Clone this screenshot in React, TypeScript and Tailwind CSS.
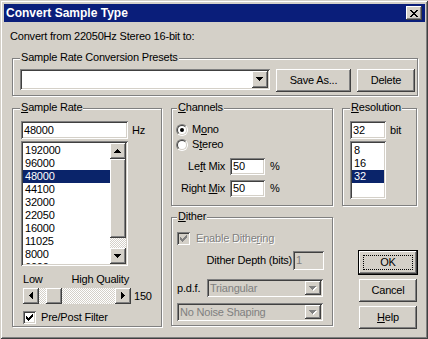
import React from "react";

const raised =
  "bg-[#d4d0c8] shadow-[inset_-1px_-1px_0_#404040,inset_1px_1px_0_#fff,inset_-2px_-2px_0_#808080,inset_2px_2px_0_#d4d0c8]";
const sunken =
  "shadow-[inset_1px_1px_0_#808080,inset_-1px_-1px_0_#fff,inset_2px_2px_0_#404040,inset_-2px_-2px_0_#d4d0c8]";
const dither = "bg-[image:repeating-conic-gradient(#d4d0c8_0_25%,#fff_0_50%)] bg-[length:2px_2px]";
const grayed = "text-[#808080] [text-shadow:1px_1px_0_#fff]";

const arrows: Record<string, { w: number; h: number; d: string }> = {
  down: { w: 7, h: 4, d: "M0 0h7v1H0z M1 1h5v1H1z M2 2h3v1H2z M3 3h1v1H3z" },
  up: { w: 7, h: 4, d: "M3 0h1v1H3z M2 1h3v1H2z M1 2h5v1H1z M0 3h7v1H0z" },
  left: { w: 4, h: 7, d: "M3 0h1v7H3z M2 1h1v5H2z M1 2h1v3H1z M0 3h1v1H0z" },
  right: { w: 4, h: 7, d: "M0 0h1v7H0z M1 1h1v5H1z M2 2h1v3H2z M3 3h1v1H3z" },
};

function Arrow({ dir, disabled }: { dir: string; disabled?: boolean }) {
  const a = arrows[dir];
  return (
    <svg width={a.w + 1} height={a.h + 1} shapeRendering="crispEdges">
      {disabled && <path d={a.d} fill="#fff" transform="translate(1 1)" />}
      <path d={a.d} fill={disabled ? "#808080" : "#000"} />
    </svg>
  );
}

function Check({ color = "#000" }: { color?: string }) {
  return (
    <svg width="7" height="7" shapeRendering="crispEdges">
      <path
        d="M6 0h1v1H6z M5 1h2v1H5z M0 2h1v1H0z M4 2h3v1H4z M0 3h2v1H0z M3 3h3v1H3z M0 4h5v1H0z M1 5h3v1H1z M2 6h1v1H2z"
        fill={color}
      />
    </svg>
  );
}

function Group({ label, className, left = "left-[7px]", children }: any) {
  return (
    <div className={`relative border border-[#808080] shadow-[inset_1px_1px_0_#fff,1px_1px_0_#fff] ${className}`}>
      <span className={`absolute -top-[8px] ${left} px-[1px] bg-[#d4d0c8] leading-[13px]`}>{label}</span>
      {children}
    </div>
  );
}

function Button({ children, className = "" }: any) {
  return <div className={`${raised} h-[23px] w-[58px] flex items-center justify-center ${className}`}>{children}</div>;
}

function CheckBox({ disabled }: { disabled?: boolean }) {
  return (
    <div className={`${sunken} ${disabled ? "bg-[#d4d0c8]" : "bg-white"} w-[13px] h-[13px] flex items-center justify-center shrink-0`}>
      <Check color={disabled ? "#808080" : "#000"} />
    </div>
  );
}

function Radio({ checked }: { checked?: boolean }) {
  return (
    <div className="w-[12px] h-[12px] rounded-full border border-t-[#808080] border-l-[#808080] border-b-white border-r-white shrink-0">
      <div className="w-full h-full rounded-full border border-t-[#404040] border-l-[#404040] border-b-[#d4d0c8] border-r-[#d4d0c8] bg-white flex items-center justify-center">
        {checked && <div className="w-[4px] h-[4px] rounded-full bg-black" />}
      </div>
    </div>
  );
}

function Combo({ text, disabled, className }: any) {
  return (
    <div className={`${sunken} ${disabled ? "bg-[#d4d0c8]" : "bg-white"} p-[2px] flex ${className}`}>
      <div className={`flex-1 pl-[1px] flex items-center ${disabled ? "text-[#808080]" : ""}`}>{text}</div>
      <div className={`${raised} w-[16px] h-full flex items-center justify-center`}>
        <Arrow dir="down" disabled={disabled} />
      </div>
    </div>
  );
}

function Edit({ value, className, disabled }: any) {
  return (
    <div className={`${sunken} ${disabled ? "bg-[#d4d0c8] text-[#808080]" : "bg-white"} pl-[3px] flex items-center ${className}`}>
      {value}
    </div>
  );
}

const rates = ["192000", "96000", "48000", "44100", "32000", "22050", "16000", "11025", "8000", "6000"];

export default function App() {
  return (
    <div className="w-[428px] h-[339px] overflow-hidden bg-[#d4d0c8] pl-[4px] pr-[3px] pt-[4px] shadow-[inset_1px_1px_0_#d4d0c8,inset_-1px_-1px_0_#404040,inset_2px_2px_0_#fff,inset_-2px_-2px_0_#808080] font-['Liberation_Sans',Arial,sans-serif] text-[11px] leading-[13px] tracking-[-0.2px] text-black">
      <div className="h-[18px] bg-[#0a1e7a] flex items-center justify-between pl-[2px] pr-[3px]">
        <span className="text-white font-bold text-[12px] tracking-normal">Convert Sample Type</span>
        <div className={`${raised} w-[16px] h-[14px] flex items-center justify-center`}>
          <svg width="8" height="7" shapeRendering="crispEdges">
            <path
              d="M0 0h2v1H0z M6 0h2v1H6z M1 1h2v1H1z M5 1h2v1H5z M2 2h4v1H2z M3 3h2v1H3z M2 4h4v1H2z M1 5h2v1H1z M5 5h2v1H5z M0 6h2v1H0z M6 6h2v1H6z"
              fill="#000"
            />
          </svg>
        </div>
      </div>

      <div className="pl-[8px]">
        <div className="-ml-[2px] mt-[8px] h-[13px]">Convert from 22050Hz Stereo 16-bit to:</div>

        <Group label="Sample Rate Conversion Presets" className="mt-[15px] w-[406px] h-[38px] pl-[7px] pt-[10px] flex">
          <Combo className="w-[250px] h-[21px]" text="" />
          <Button className="ml-[6px] w-[75px] h-[21px]">Save As...</Button>
          <Button className="ml-[6px] w-[54px] h-[21px]">Delete</Button>
        </Group>

        <div className="flex items-start gap-[9px] mt-[12px]">
          {/* sample rate */}
          <Group
            label={<><u>S</u>ample Rate</>}
            className="w-[150px] h-[219px] pl-[8px] pt-[12px]"
          >
            <div className="flex items-center">
              <Edit value="48000" className="w-[107px] h-[18px]" />
              <span className="ml-[4px]">Hz</span>
            </div>
            <div className={`${sunken} bg-white p-[2px] flex w-[107px] h-[125px] mt-[2px]`}>
              <div className="flex-1 pt-[1px] overflow-hidden">
                {rates.map((r) => (
                  <div key={r} className={`h-[13px] pl-[2px] ${r === "48000" ? "bg-[#0a246a] text-white" : ""}`}>
                    {r}
                  </div>
                ))}
              </div>
              <div className="w-[16px] flex flex-col">
                <div className={`${raised} h-[16px] flex items-center justify-center`}>
                  <Arrow dir="up" />
                </div>
                <div className={`${raised} h-[79px]`} />
                <div className={`flex-1 ${dither}`} />
                <div className={`${raised} h-[16px] flex items-center justify-center`}>
                  <Arrow dir="down" />
                </div>
              </div>
            </div>
            <div className="ml-[2px] mt-[7px] w-[108px] flex justify-between pr-[2px]">
              <span>Low</span>
              <span>High Quality</span>
            </div>
            <div className="ml-[2px] mt-[2px] flex items-center">
              <div className="w-[108px] h-[16px] flex">
                <div className={`${raised} w-[16px] flex items-center justify-center`}>
                  <Arrow dir="left" />
                </div>
                <div className={`flex-1 pl-[7px] ${dither}`}>
                  <div className={`${raised} w-[16px] h-[16px]`} />
                </div>
                <div className={`${raised} w-[16px] flex items-center justify-center`}>
                  <Arrow dir="right" />
                </div>
              </div>
              <span className="ml-[3px]">150</span>
            </div>
            <div className="ml-[2px] mt-[7px] flex items-center">
              <CheckBox />
              <span className="ml-[5px]">Pre/Post Filter</span>
            </div>
          </Group>

          {/* channels + dither */}
          <div className="flex flex-col">
            <Group
              label={<><u>C</u>hannels</>}
              left="left-[5px]"
              className="w-[162px] h-[98px] pl-[4px] pt-[14px]"
            >
              <div className="flex items-center h-[13px]">
                <Radio checked />
                <span className="ml-[4px]">M<u>o</u>no</span>
              </div>
              <div className="flex items-center h-[13px] mt-[2px]">
                <Radio />
                <span className="ml-[4px]">S<u>t</u>ereo</span>
              </div>
              <div className="flex items-center mt-[7px]">
                <span className="w-[49px] text-right">Le<u>f</u>t Mix</span>
                <Edit value="50" className="ml-[5px] w-[35px] h-[17px]" />
                <span className="ml-[5px]">%</span>
              </div>
              <div className="flex items-center mt-[5px]">
                <span className="w-[49px] text-right">Right <u>M</u>ix</span>
                <Edit value="50" className="ml-[5px] w-[35px] h-[17px]" />
                <span className="ml-[5px]">%</span>
              </div>
            </Group>

            <Group
              label={<><u>D</u>ither</>}
              left="left-[5px]"
              className="mt-[11px] w-[162px] h-[109px] pl-[5px] pt-[14px]"
            >
              <div className="flex items-center h-[13px]">
                <CheckBox disabled />
                <span className={`ml-[6px] ${grayed}`}>Enable Dithe<u>r</u>ing</span>
              </div>
              <div className="flex items-center justify-end pr-[8px] mt-[6px]">
                <span>Dither Depth (bits)</span>
                <Edit value="1" disabled className="ml-[1px] w-[31px] h-[19px]" />
              </div>
              <div className="flex items-center mt-[9px]">
                <span className="w-[30px]">p.d.f.</span>
                <Combo disabled text="Triangular" className="w-[116px] h-[18px]" />
              </div>
              <Combo disabled text="No Noise Shaping" className="mt-[6px] w-[146px] h-[18px]" />
            </Group>
          </div>

          {/* resolution + buttons */}
          <div className="flex flex-col">
            <Group
              label={<><u>R</u>esolution</>}
              className="w-[75px] h-[98px] pl-[7px] pt-[12px]"
            >
              <div className="flex items-center">
                <Edit value="32" className="w-[36px] h-[18px]" />
                <span className="ml-[4px]">bit</span>
              </div>
              <div className={`${sunken} bg-white p-[2px] w-[36px] h-[58px] mt-[2px]`}>
                <div className="pt-[1px]">
                  {["8", "16", "32"].map((b) => (
                    <div key={b} className={`h-[13px] pl-[2px] ${b === "32" ? "bg-[#0a246a] text-white" : ""}`}>
                      {b}
                    </div>
                  ))}
                </div>
              </div>
            </Group>

            <div className="ml-[17px] mt-[45px] flex flex-col">
              <div className={`${raised} h-[23px] w-[58px] p-[4px] outline outline-1 outline-black`}>
                <div className="h-full border border-dotted border-black flex items-center justify-center">OK</div>
              </div>
              <Button className="mt-[5px]">Cancel</Button>
              <Button className="mt-[4px]">
                <span>
                  <u>H</u>elp
                </span>
              </Button>
            </div>
          </div>
        </div>
      </div>
    </div>
  );
}
